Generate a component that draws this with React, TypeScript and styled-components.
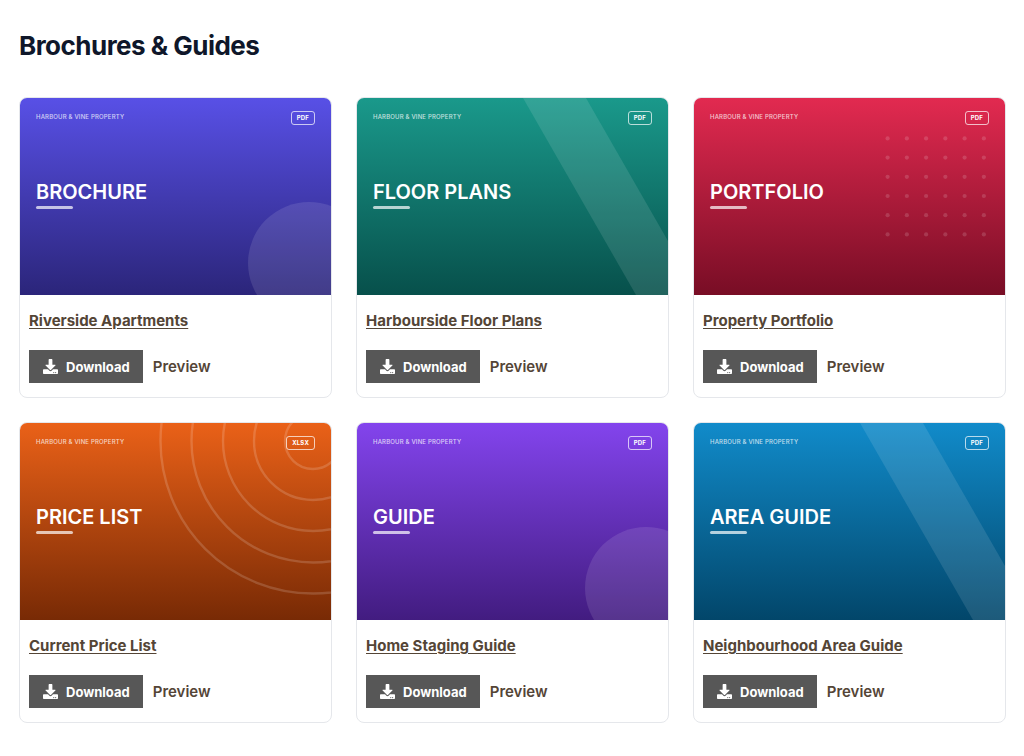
import React from "react";
import styled, { createGlobalStyle } from "styled-components";
import { FaDownload } from "react-icons/fa";

type Pattern = "circle" | "band" | "dots" | "rings";

interface Doc {
  id: string;
  name: string;
  cover: string;
  format: string;
  from: string;
  to: string;
  pattern: Pattern;
}

const docs: Doc[] = [
  { id: "riverside", name: "Riverside Apartments", cover: "BROCHURE", format: "PDF", from: "#5850e6", to: "#2b257a", pattern: "circle" },
  { id: "floor-plans", name: "Harbourside Floor Plans", cover: "FLOOR PLANS", format: "PDF", from: "#1a998b", to: "#07504b", pattern: "band" },
  { id: "portfolio", name: "Property Portfolio", cover: "PORTFOLIO", format: "PDF", from: "#e22a50", to: "#780d25", pattern: "dots" },
  { id: "price-list", name: "Current Price List", cover: "PRICE LIST", format: "XLSX", from: "#ea6118", to: "#782a05", pattern: "rings" },
  { id: "staging", name: "Home Staging Guide", cover: "GUIDE", format: "PDF", from: "#8344ed", to: "#421c80", pattern: "circle" },
  { id: "area", name: "Neighbourhood Area Guide", cover: "AREA GUIDE", format: "PDF", from: "#118bca", to: "#02466a", pattern: "band" },
];

const GlobalStyle = createGlobalStyle`
  *, *::before, *::after { box-sizing: border-box; }
  body {
    margin: 0;
    background: #fff;
    color: #544536;
    font-family: Inter, "Liberation Sans", sans-serif;
  }
`;

const Page = styled.main`
  padding: 28px 18px 32px 19px;
`;

const Heading = styled.h1`
  margin: 0 0 33px;
  font-size: 26px;
  line-height: 36px;
  font-weight: 700;
  letter-spacing: -0.02em;
  color: #0f172a;
`;

const Grid = styled.ul`
  display: grid;
  grid-template-columns: repeat(3, minmax(0, 1fr));
  gap: 24px;
  margin: 0;
  padding: 0;
  list-style: none;
`;

const Card = styled.li`
  display: flex;
  flex-direction: column;
  overflow: hidden;
  border: 1px solid #e5e7eb;
  border-radius: 8px;
  background: #fff;
`;

const Cover = styled.div<{ $from: string; $to: string }>`
  display: grid;
  aspect-ratio: 311 / 197;
  background: linear-gradient(${(p) => p.$from}, ${(p) => p.$to});
  color: #fff;

  > * {
    grid-area: 1 / 1;
    min-width: 0;
    min-height: 0;
  }
`;

const Art = styled.svg`
  display: block;
  width: 100%;
  height: 100%;
`;

const CoverText = styled.div`
  display: flex;
  flex-direction: column;
  padding: 13px 16px;
`;

const CoverTop = styled.div`
  display: flex;
  justify-content: space-between;
  align-items: flex-start;
  height: 68px;
`;

const Brand = styled.span`
  font-size: 6px;
  line-height: 12px;
  font-weight: 500;
  letter-spacing: 0.03em;
  color: rgba(255, 255, 255, 0.75);
`;

const Format = styled.span`
  padding: 0 5px;
  border: 1px solid rgba(255, 255, 255, 0.7);
  border-radius: 3px;
  font-size: 6px;
  line-height: 12px;
  font-weight: 700;
  letter-spacing: 0.03em;
`;

const CoverTitle = styled.span`
  font-size: 20px;
  line-height: 27px;
  font-weight: 600;
`;

const Rule = styled.span`
  width: 37px;
  height: 3px;
  border-radius: 2px;
  background: rgba(255, 255, 255, 0.7);
`;

const Body = styled.div`
  display: flex;
  flex-direction: column;
  align-items: flex-start;
  gap: 17px;
  padding: 14px 9px;
`;

const DocLink = styled.a`
  color: inherit;
  font-size: 15px;
  line-height: 24px;
  font-weight: 700;
  text-underline-offset: 2px;
`;

const Actions = styled.div`
  display: flex;
  align-items: center;
  gap: 10px;
`;

const DownloadButton = styled.button`
  display: flex;
  align-items: center;
  gap: 8px;
  height: 33px;
  padding: 0 13px 0 14px;
  border: 0;
  background: #575757;
  color: #fff;
  font: 700 13px/20px Inter, "Liberation Sans", sans-serif;
  cursor: pointer;
`;

const PreviewLink = styled.a`
  color: inherit;
  font-size: 15px;
  line-height: 20px;
  font-weight: 600;
  text-decoration: none;
`;

const steps = [0, 1, 2, 3, 4, 5];

function CoverArt({ pattern }: { pattern: Pattern }) {
  return (
    <Art viewBox="0 0 311 197" preserveAspectRatio="xMaxYMid slice" aria-hidden="true">
      {pattern === "circle" && <circle cx="289" cy="165" r="61" fill="#fff" fillOpacity="0.11" />}
      {pattern === "band" && <path d="M166 0h63l113 197h-63z" fill="#fff" fillOpacity="0.11" />}
      {pattern === "dots" &&
        steps.map((row) =>
          steps.map((col) => (
            <circle
              key={`${row}-${col}`}
              cx={193.6 + col * 19.25}
              cy={40.4 + row * 19.2}
              r="2.1"
              fill="#fff"
              fillOpacity="0.15"
            />
          )),
        )}
      {pattern === "rings" &&
        [28, 59, 90, 121.5, 152.5].map((r) => (
          <circle key={r} cx="293" cy="18" r={r} fill="none" stroke="#fff" strokeOpacity="0.16" strokeWidth="2.4" />
        ))}
    </Art>
  );
}

function DocCard({ doc }: { doc: Doc }) {
  return (
    <Card>
      <Cover $from={doc.from} $to={doc.to}>
        <CoverArt pattern={doc.pattern} />
        <CoverText>
          <CoverTop>
            <Brand>HARBOUR &amp; VINE PROPERTY</Brand>
            <Format>{doc.format}</Format>
          </CoverTop>
          <CoverTitle>{doc.cover}</CoverTitle>
          <Rule />
        </CoverText>
      </Cover>
      <Body>
        <DocLink href={`#${doc.id}`}>{doc.name}</DocLink>
        <Actions>
          <DownloadButton type="button">
            <FaDownload size={15} aria-hidden="true" />
            Download
          </DownloadButton>
          <PreviewLink href={`#${doc.id}-preview`}>Preview</PreviewLink>
        </Actions>
      </Body>
    </Card>
  );
}

export default function App() {
  return (
    <>
      <GlobalStyle />
      <Page>
        <Heading>Brochures &amp; Guides</Heading>
        <Grid>
          {docs.map((doc) => (
            <DocCard key={doc.id} doc={doc} />
          ))}
        </Grid>
      </Page>
    </>
  );
}
